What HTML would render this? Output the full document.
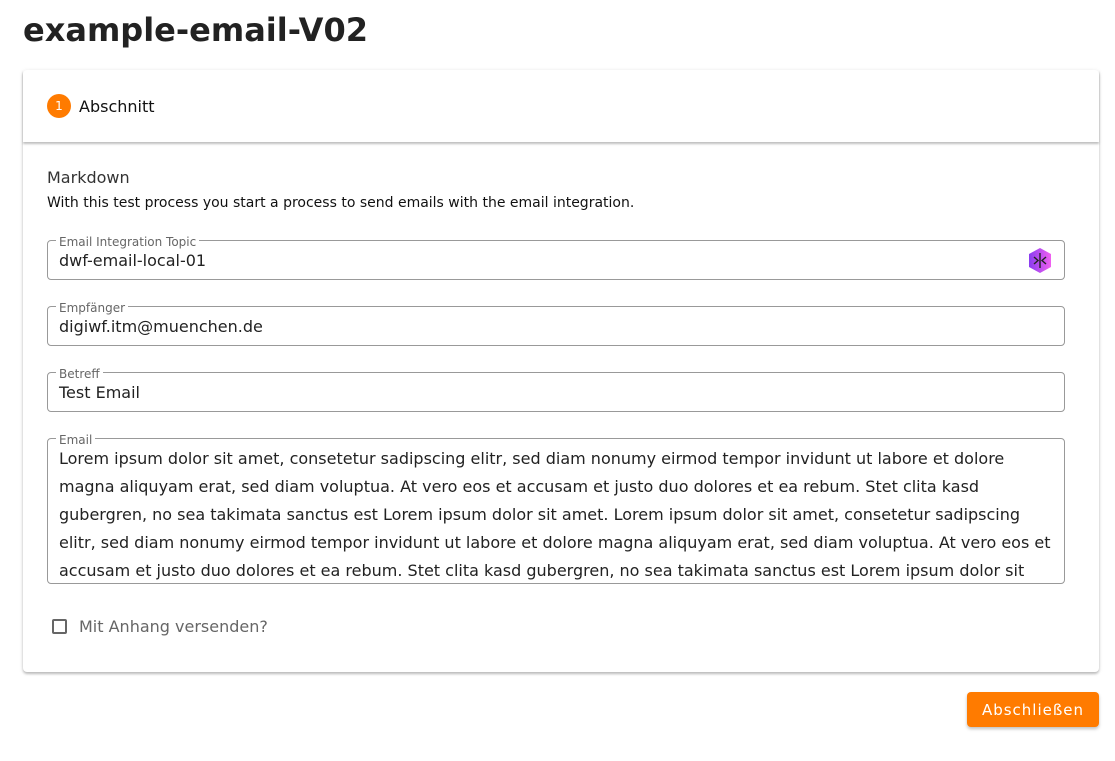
<!DOCTYPE html>
<html><head><meta charset="utf-8"><style>
*{box-sizing:border-box;margin:0;padding:0}
body{width:1115px;height:761px;background:#fff;font-family:"DejaVu Sans","Liberation Sans",sans-serif;color:#222;position:relative;overflow:hidden}
h1{position:absolute;left:23px;top:11px;font-size:32px;font-weight:bold;color:#222}
.card{position:absolute;left:23px;top:70px;width:1076px;height:602px;background:#fff;border-radius:4px;box-shadow:0 2px 2px rgba(0,0,0,.2),0 1px 5px rgba(0,0,0,.12)}
.hdr{position:absolute;left:0;top:0;width:100%;height:72px;box-shadow:0 2px 2px rgba(0,0,0,.25)}
.num{position:absolute;left:24px;top:24px;width:24px;height:24px;border-radius:50%;background:#ff7b00;color:#fff;font-size:12px;text-align:center;line-height:24px}
.ht{position:absolute;left:56px;top:27px;font-size:16px;color:#111}
.md{position:absolute;left:24px;top:98px;font-size:16px;color:#333}
.desc{position:absolute;left:24px;top:125px;font-size:14px;color:#111}
.f{position:absolute;left:24px;width:1018px;border:1px solid #999;border-radius:4px}
.f label{position:absolute;left:8px;top:-5px;background:#fff;padding:0 3px;font-size:12px;color:#666;line-height:12px}
.f .v{position:absolute;left:11px;top:10px;font-size:16px;color:#222}
.ta{font-size:16px;line-height:28px;color:#222;padding:6px 11px 0;height:144px;overflow:hidden}
.cb{position:absolute;left:29px;top:549px;width:15px;height:15px;border:2px solid #666;border-radius:2px}
.cbl{position:absolute;left:56px;top:547px;font-size:16px;color:#666}
.btn{position:absolute;left:967px;top:692px;width:132px;height:35px;background:#ff7b00;color:#fff;border-radius:4px;font-size:15px;letter-spacing:1px;text-align:center;line-height:36px;box-shadow:0 2px 3px rgba(0,0,0,.25)}
</style></head><body>
<h1>example-email-V02</h1>
<div class="card">
<div class="hdr"><div class="num">1</div><div class="ht">Abschnitt</div></div>
<div class="md">Markdown</div>
<div class="desc">With this test process you start a process to send emails with the email integration.</div>
<div class="f" style="top:170px;height:40px"><label>Email Integration Topic</label><div class="v">dwf-email-local-01</div>
<svg style="position:absolute;right:11px;top:6px" width="26" height="27" viewBox="0 0 26 27"><defs><linearGradient id="g" x1="0" x2="1"><stop offset="0" stop-color="#8a3cf0"/><stop offset="1" stop-color="#f060f0"/></linearGradient></defs><polygon points="13,1 24,7 24,20 13,26 2,20 2,7" fill="url(#g)"/><g stroke="#222" stroke-width="1.4" fill="none"><line x1="13" y1="6" x2="13" y2="21"/><path d="M7 10l4 3.5-4 3.5M19 10l-4 3.5 4 3.5"/></g></svg></div>
<div class="f" style="top:236px;height:40px"><label>Empfänger</label><div class="v">digiwf.itm@muenchen.de</div></div>
<div class="f" style="top:302px;height:40px"><label>Betreff</label><div class="v">Test Email</div></div>
<div class="f" style="top:368px;height:146px"><label>Email</label><div class="ta">Lorem ipsum dolor sit amet, consetetur sadipscing elitr, sed diam nonumy eirmod tempor invidunt ut labore et dolore magna aliquyam erat, sed diam voluptua. At vero eos et accusam et justo duo dolores et ea rebum. Stet clita kasd gubergren, no sea takimata sanctus est Lorem ipsum dolor sit amet. Lorem ipsum dolor sit amet, consetetur sadipscing elitr, sed diam nonumy eirmod tempor invidunt ut labore et dolore magna aliquyam erat, sed diam voluptua. At vero eos et accusam et justo duo dolores et ea rebum. Stet clita kasd gubergren, no sea takimata sanctus est Lorem ipsum dolor sit amet.</div></div>
<div class="cb"></div><div class="cbl">Mit Anhang versenden?</div>
</div>
<div class="btn">Abschließen</div>
</body></html>
